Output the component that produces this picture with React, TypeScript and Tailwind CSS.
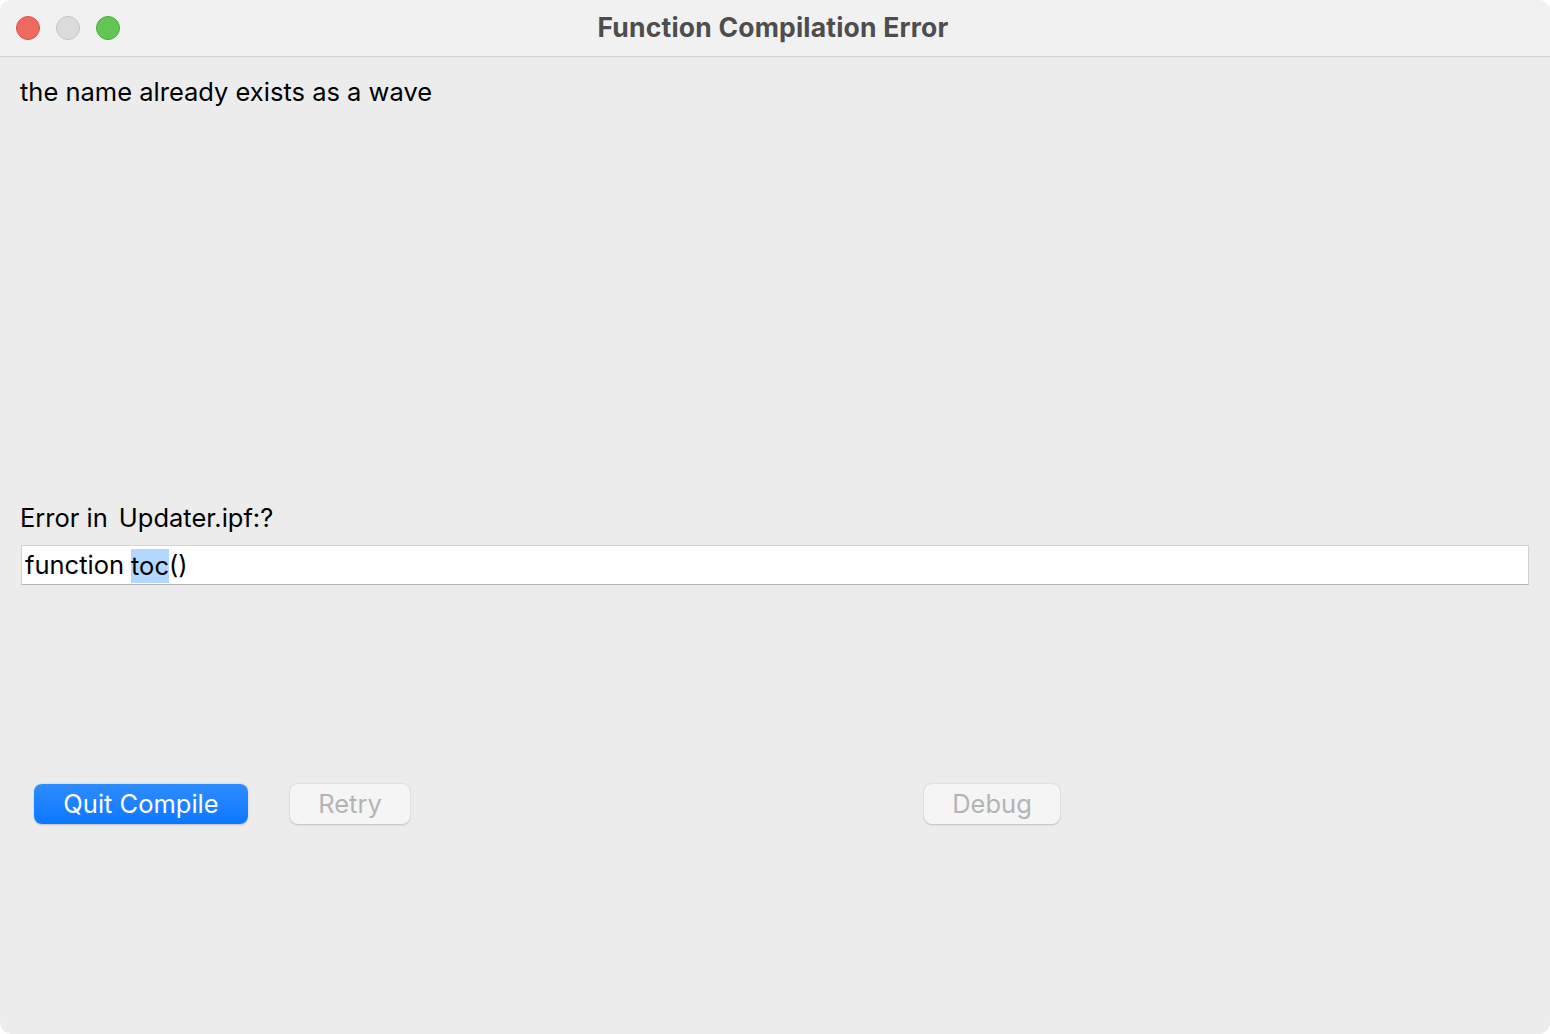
import React from "react";

export default function App() {
  const font = { fontFamily: "Inter, 'Noto Sans', 'Liberation Sans', sans-serif" };
  return (
    <div className="w-[1550px] h-[1034px] bg-white" style={font}>
      <div className="w-full h-full rounded-[12px] overflow-hidden bg-[#ececec] flex flex-col">
        <div className="h-[57px] bg-[#f1f1f1] border-b border-[#d2d2d2] flex items-center relative shrink-0">
          <div className="flex items-center gap-[16px] pl-[16px]">
            <div className="w-[24px] h-[24px] rounded-full bg-[#ee6a5f] border border-[#d5554b]" />
            <div className="w-[24px] h-[24px] rounded-full bg-[#dcdcdc] border border-[#c4c4c4]" />
            <div className="w-[24px] h-[24px] rounded-full bg-[#62c554] border border-[#4eab41]" />
          </div>
          <div className="absolute inset-0 flex items-center justify-center pointer-events-none">
            <span className="text-[26.5px] font-bold text-[#4d4d4d] tracking-[0.2px] ml-[-4px]">Function Compilation Error</span>
          </div>
        </div>
        <div className="flex-1 flex flex-col px-[20px]">
          <div className="pt-[19px] text-[25.5px] text-black leading-[32px]">the name already exists as a wave</div>
          <div className="mt-[394px] text-[25.5px] text-black leading-[32px] flex">
            <span>Error in</span>
            <span className="ml-[11px]">Updater.ipf:?</span>
          </div>
          <div className="mt-[11px] ml-[1px] w-[1508px] h-[40px] bg-white border border-[#d3d3d3] border-b-[#b5b5b5] flex items-center pl-[3px] pt-[1px] text-[25.5px] text-black">
            <span>function </span>
            <span className="bg-[#b3d7ff] leading-[34px] ml-[7px]">toc</span>
            <span>()</span>
          </div>
          <div className="mt-[199px] flex items-center pl-[14px]">
            <button className="w-[214px] h-[40px] rounded-[8px] bg-gradient-to-b from-[#2d8cff] to-[#0877ff] text-white text-[25.5px] shadow-[0_0.5px_2px_rgba(0,0,0,0.2)]">
              Quit Compile
            </button>
            <button className="ml-[42px] w-[120px] h-[40px] rounded-[8px] bg-[#f5f5f5] text-[#b4b4b4] text-[25.5px] shadow-[0_0.5px_2px_rgba(0,0,0,0.2)]">
              Retry
            </button>
            <button className="ml-[514px] w-[136px] h-[40px] rounded-[8px] bg-[#f5f5f5] text-[#b4b4b4] text-[25.5px] shadow-[0_0.5px_2px_rgba(0,0,0,0.2)]">
              Debug
            </button>
          </div>
        </div>
      </div>
    </div>
  );
}
